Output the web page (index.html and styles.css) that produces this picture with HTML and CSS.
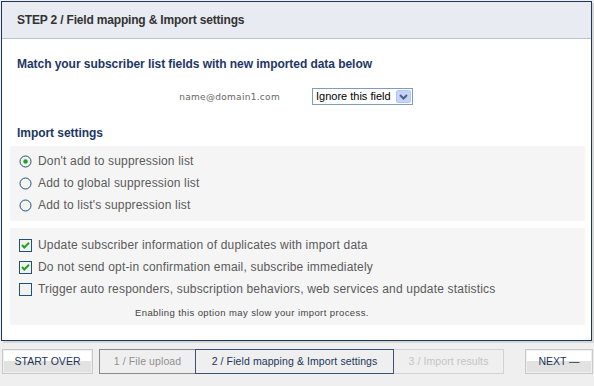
FILE: index.html
```html
<!DOCTYPE html>
<html>
<head>
<meta charset="utf-8">
<link rel="stylesheet" href="styles.css">
</head>
<body>
<div class="panel">
  <div class="panel-head">STEP 2 / Field mapping &amp; Import settings</div>
  <div class="panel-body">
    <h2 class="title t-match">Match your subscriber list fields with new imported data below</h2>
    <div class="map-row">
      <div class="map-label">name@domain1.com</div>
      <div class="fake-select">
        <span class="sel-text">Ignore this field</span>
        <span class="sel-btn"><svg width="13" height="13" viewBox="0 0 13 13"><path d="M3 5 L6.5 8.5 L10 5" fill="none" stroke="#4d6185" stroke-width="2"/></svg></span>
      </div>
    </div>
    <h2 class="title t-import">Import settings</h2>
    <div class="box box-radio">
      <div class="opt"><svg class="ctl" width="13" height="13" viewBox="0 0 13 13"><circle cx="6.5" cy="6.5" r="5.5" fill="#f4f4f0" stroke="#1c5180"/><circle cx="6.5" cy="6.5" r="2.2" fill="#21a121"/></svg><span>Don't add to suppression list</span></div>
      <div class="opt"><svg class="ctl" width="13" height="13" viewBox="0 0 13 13"><circle cx="6.5" cy="6.5" r="5.5" fill="#f4f4f0" stroke="#1c5180"/></svg><span>Add to global suppression list</span></div>
      <div class="opt"><svg class="ctl" width="13" height="13" viewBox="0 0 13 13"><circle cx="6.5" cy="6.5" r="5.5" fill="#f4f4f0" stroke="#1c5180"/></svg><span>Add to list's suppression list</span></div>
    </div>
    <div class="box box-check">
      <div class="opt"><svg class="ctl" width="13" height="13" viewBox="0 0 13 13"><rect x="0.5" y="0.5" width="12" height="12" fill="#f2f2ee" stroke="#1c5180"/><path d="M3 6 L5.3 8.5 L10 3.8" fill="none" stroke="#21a121" stroke-width="2"/></svg><span>Update subscriber information of duplicates with import data</span></div>
      <div class="opt"><svg class="ctl" width="13" height="13" viewBox="0 0 13 13"><rect x="0.5" y="0.5" width="12" height="12" fill="#f2f2ee" stroke="#1c5180"/><path d="M3 6 L5.3 8.5 L10 3.8" fill="none" stroke="#21a121" stroke-width="2"/></svg><span>Do not send opt-in confirmation email, subscribe immediately</span></div>
      <div class="opt"><svg class="ctl" width="13" height="13" viewBox="0 0 13 13"><rect x="0.5" y="0.5" width="12" height="12" fill="#f2f2ee" stroke="#1c5180"/></svg><span>Trigger auto responders, subscription behaviors, web services and update statistics</span></div>
      <div class="note">Enabling this option may slow your import process.</div>
    </div>
  </div>
</div>
<div class="bar">
  <div class="btn btn-start">START OVER</div>
  <div class="steps">
    <div class="step step-1">1 / File upload</div>
    <div class="step step-2">2 / Field mapping &amp; Import settings</div>
    <div class="step step-3">3 / Import results</div>
  </div>
  <div class="btn btn-next">NEXT —</div>
</div>
</body>
</html>
```
FILE: styles.css
```css
html, body {
  margin: 0;
  padding: 0;
}
body {
  background: #efefef;
  font-family: "Liberation Sans", Arial, sans-serif;
  width: 594px;
  height: 386px;
  overflow: hidden;
}
.panel {
  margin: 1px 0 0 1px;
  width: 591px;
  height: 340px;
  box-sizing: border-box;
  border: 1px solid #1c3559;
  background: #fff;
  box-shadow: 2px 2px 0 #d6d6d6;
}
.panel-head {
  height: 36px;
  line-height: 36px;
  background: #e8ebf1;
  border-bottom: 1px solid #b8c4d2;
  padding-left: 15px;
  font-size: 12px;
  font-weight: bold;
  letter-spacing: -0.18px;
  color: #333;
}
.panel-body {
  padding: 0 6px 0 8px;
}
.title {
  margin: 0;
  font-size: 12px;
  line-height: 14px;
  font-weight: bold;
  letter-spacing: -0.05px;
  color: #1d3764;
  padding-left: 7px;
}
.t-match {
  padding-top: 18px;
}
.t-import {
  margin-top: 21px;
}
.map-row {
  display: flex;
  align-items: center;
  margin-top: 17px;
  height: 17px;
}
.map-label {
  width: 270px;
  text-align: right;
  font-family: "DejaVu Sans", Verdana, sans-serif;
  font-size: 9px;
  letter-spacing: 0.3px;
  color: #666;
}
.fake-select {
  margin-left: 32px;
  width: 101px;
  height: 17px;
  box-sizing: border-box;
  border: 1px solid #7f9db9;
  background: #fff;
  display: flex;
  align-items: center;
  justify-content: space-between;
  padding: 0 1px 0 3px;
}
.sel-text {
  font-size: 11px;
  color: #000;
  line-height: 15px;
  white-space: nowrap;
}
.sel-btn {
  width: 15px;
  height: 13px;
  background: #c3d3fa;
  border: 1px solid #b4c8f5;
  border-radius: 2px;
  box-sizing: border-box;
  display: flex;
  align-items: center;
  justify-content: center;
  overflow: hidden;
}
.box {
  background: #f5f5f5;
  margin-top: 6px;
}
.box-radio {
  padding: 4px 0 5px 0;
}
.box-check {
  margin-top: 7px;
  padding: 6px 0 5px 0;
}
.opt {
  height: 22px;
  display: flex;
  align-items: center;
  padding-left: 9px;
  font-size: 12px;
  letter-spacing: 0.18px;
  color: #5a5a5a;
}
.ctl {
  margin-right: 6px;
  flex: none;
}
.note {
  height: 14px;
  line-height: 14px;
  margin-top: 6px;
  padding-left: 125px;
  font-size: 9.5px;
  letter-spacing: 0.4px;
  color: #444;
}
.bar {
  display: flex;
  margin-top: 8px;
  height: 25px;
}
.btn {
  box-sizing: border-box;
  height: 25px;
  border: 1px solid #c8c8c8;
  padding: 1px;
  background: #fff;
  font-size: 10.5px;
  color: #1c3559;
  text-align: center;
  line-height: 21px;
  background-image: linear-gradient(#fff 0, #fff 50%, #e2e2e2 50%, #e2e2e2 100%);
  background-origin: content-box;
  background-clip: content-box;
}
.btn-start {
  margin-left: 2px;
  width: 91px;
}
.btn-next {
  margin-left: auto;
  margin-right: 1px;
  width: 68px;
}
.steps {
  display: flex;
  margin-left: 6px;
}
.step {
  box-sizing: border-box;
  height: 25px;
  line-height: 23px;
  font-size: 10.5px;
  letter-spacing: 0.1px;
  text-align: center;
}
.step-1 {
  width: 96px;
  border: 1px solid #8a8a8a;
  border-right: none;
  color: #909090;
}
.step-2 {
  width: 199px;
  border: 1px solid #3d5275;
  color: #1c3559;
}
.step-3 {
  width: 110px;
  border: 1px solid #d2d2d2;
  border-left: none;
  color: #c4c4c4;
}
```
